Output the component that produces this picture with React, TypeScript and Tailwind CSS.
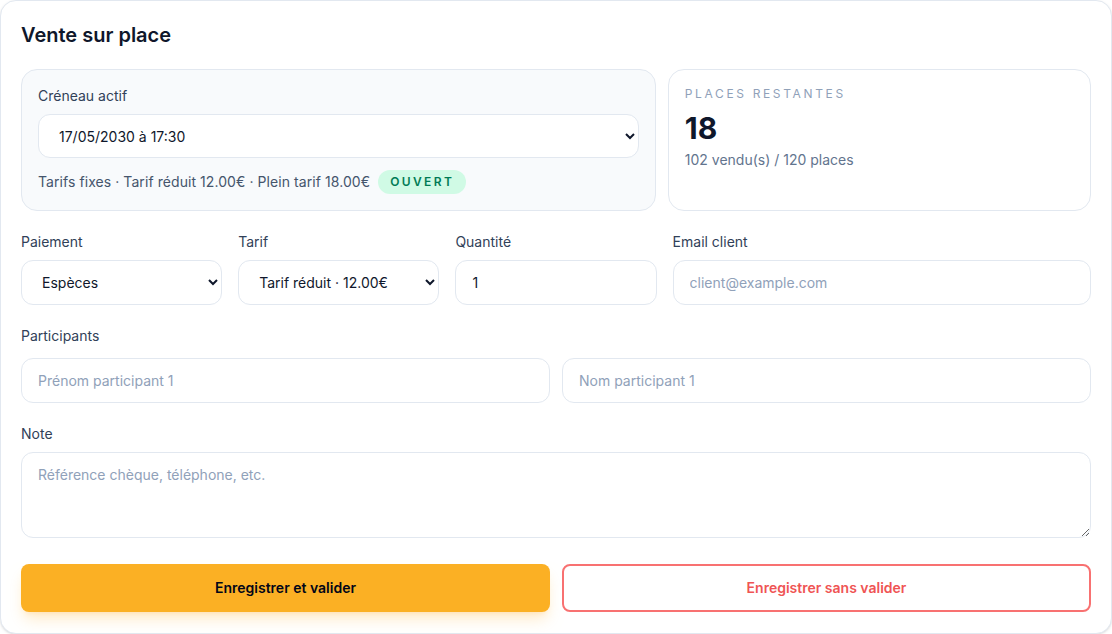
import { useState } from 'react'

const field =
  'w-full h-[45px] rounded-xl border border-slate-200 bg-white px-4 text-sm text-slate-900 placeholder:text-slate-400 outline-none'

export default function App() {
  const [qty, setQty] = useState('1')

  return (
    <div className="w-[1112px] h-[634px] bg-white font-['Inter',sans-serif]">
      <div className="h-full rounded-2xl border border-slate-200 bg-white p-5 shadow-sm">
        <h1 className="text-xl leading-7 font-semibold text-slate-900">Vente sur place</h1>

        {/* creneau + places */}
        <div className="mt-5 grid grid-cols-[3fr_2fr] gap-3">
          <div className="rounded-2xl border border-slate-200 bg-slate-50 p-4">
            <label className="block text-sm leading-5 text-slate-700">Créneau actif</label>
            <select className="mt-2 w-full h-11 rounded-xl border border-slate-200 bg-white px-4 text-sm text-slate-900 outline-none">
              <option>17/05/2030 à 17:30</option>
            </select>
            <div className="mt-3 flex items-center gap-2 h-6">
              <span className="text-sm tracking-[0.005em] text-slate-600">
                Tarifs fixes · Tarif réduit 12.00€ · Plein tarif 18.00€
              </span>
              <span className="rounded-full bg-emerald-100 px-3 py-1 text-xs leading-4 font-semibold tracking-[0.2em] text-emerald-700">
                OUVERT
              </span>
            </div>
          </div>
          <div className="rounded-2xl border border-slate-200 bg-white p-4">
            <div className="text-xs leading-4 tracking-[0.22em] text-slate-400">PLACES RESTANTES</div>
            <div className="mt-2 text-3xl leading-9 font-bold text-slate-900">18</div>
            <div className="mt-1 text-sm leading-5 text-slate-500">102 vendu(s) / 120 places</div>
          </div>
        </div>

        {/* paiement row */}
        <div className="mt-[21px] grid grid-cols-5 gap-4">
          <div>
            <label className="block text-sm leading-5 text-slate-700">Paiement</label>
            <select className={`mt-2 ${field}`}>
              <option>Espèces</option>
              <option>Carte</option>
              <option>Chèque</option>
            </select>
          </div>
          <div>
            <label className="block text-sm leading-5 text-slate-700">Tarif</label>
            <select className={`mt-2 ${field}`}>
              <option>Tarif réduit · 12.00€</option>
              <option>Plein tarif · 18.00€</option>
            </select>
          </div>
          <div>
            <label className="block text-sm leading-5 text-slate-700">Quantité</label>
            <input className={`mt-2 ${field}`} value={qty} onChange={e => setQty(e.target.value)} />
          </div>
          <div className="col-span-2">
            <label className="block text-sm leading-5 text-slate-700">Email client</label>
            <input className={`mt-2 ${field}`} placeholder="client@example.com" />
          </div>
        </div>

        {/* participants */}
        <div className="mt-[21px]">
          <label className="block text-sm leading-5 text-slate-700">Participants</label>
          <div className="mt-3 grid grid-cols-2 gap-3">
            <input className={field} placeholder="Prénom participant 1" />
            <input className={field} placeholder="Nom participant 1" />
          </div>
        </div>

        {/* note */}
        <div className="mt-[21px]">
          <label className="block text-sm leading-5 text-slate-700">Note</label>
          <textarea
            className="mt-2 block w-full h-[86px] rounded-xl border border-slate-200 bg-white px-4 py-3 text-sm text-slate-900 placeholder:text-slate-400 outline-none"
            placeholder="Référence chèque, téléphone, etc."
          />
        </div>

        <div className="mt-[26px] grid grid-cols-2 gap-3">
          <button className="h-12 rounded-lg bg-[#fbb024] text-sm font-semibold text-slate-950 shadow-lg shadow-amber-500/20">
            Enregistrer et valider
          </button>
          <button className="h-12 rounded-lg border-2 border-[#f87171] bg-white text-sm font-semibold text-[#ef5454]">
            Enregistrer sans valider
          </button>
        </div>
      </div>
    </div>
  )
}
